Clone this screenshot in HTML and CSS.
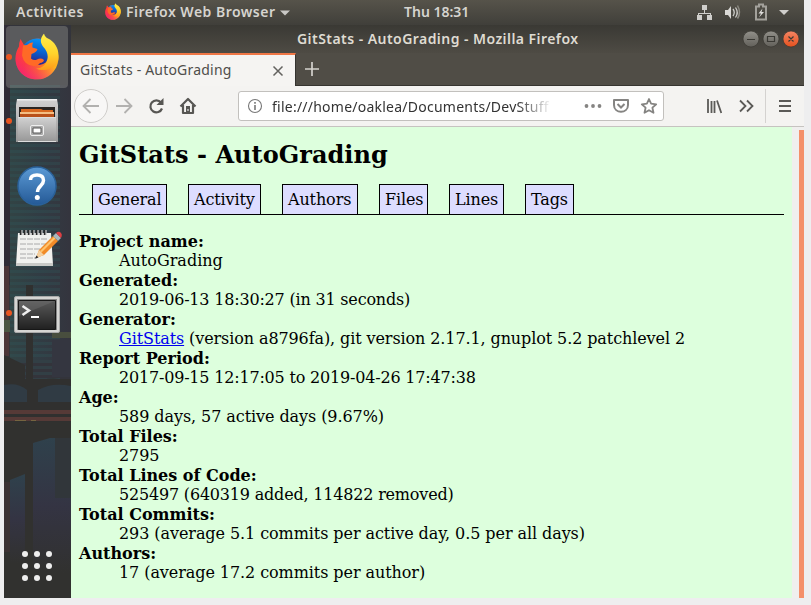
FILE: index.html
```html
<!DOCTYPE html>
<html lang="en">
<head>
<meta charset="utf-8">
<title>GitStats - AutoGrading</title>
<link rel="stylesheet" href="styles.css">
</head>
<body>
<svg class="defs" aria-hidden="true">
  <defs>
    <linearGradient id="fire" x1="0" y1=".3" x2="1" y2=".7"><stop offset="0" stop-color="#ff3a3f"/><stop offset=".3" stop-color="#ff4a2c"/><stop offset=".6" stop-color="#ff7a1c"/><stop offset="1" stop-color="#ffbd1c"/></linearGradient>
    <linearGradient id="pink" x1=".7" y1=".2" x2=".3" y2="1"><stop offset=".4" stop-color="#f0148c" stop-opacity="0"/><stop offset="1" stop-color="#f0148c" stop-opacity=".75"/></linearGradient>
    <linearGradient id="flame" x1="0" y1="0" x2="0" y2="1"><stop offset="0" stop-color="#fff04a"/><stop offset=".55" stop-color="#ffd32c"/><stop offset="1" stop-color="#ff9a18"/></linearGradient>
    <linearGradient id="globe" x1=".6" y1="0" x2=".4" y2="1"><stop offset="0" stop-color="#0a94f5"/><stop offset=".5" stop-color="#0860cf"/><stop offset="1" stop-color="#331b80"/></linearGradient>
    <linearGradient id="metal" x1="0" y1="0" x2="0" y2="1"><stop offset="0" stop-color="#d2d2d2"/><stop offset="1" stop-color="#969696"/></linearGradient>
    <linearGradient id="help" x1="0" y1="0" x2="0" y2="1"><stop offset="0" stop-color="#5b9ad5"/><stop offset="1" stop-color="#245996"/></linearGradient>
    <linearGradient id="screen" x1="0" y1="0" x2="0" y2="1"><stop offset="0" stop-color="#5a5a5a"/><stop offset="1" stop-color="#202020"/></linearGradient>
    <symbol id="firefox" viewBox="0 0 44 46">
      <path d="M5.500 5.500l3.500 6Q15 5 24 5L40 14q4 6 3.500 12C42 38 33 46 22 46 10 46 .5 37 .5 25 .5 20 2 16 4 13q0-4 1.500-7.500z" fill="url(#fire)"/>
      <path d="M5.500 5.500l3.500 6Q15 5 24 5L40 14q4 6 3.500 12C42 38 33 46 22 46 10 46 .5 37 .5 25 .5 20 2 16 4 13q0-4 1.500-7.500z" fill="url(#pink)"/>
      <path d="M9 11.500Q14 5 22 5q12 0 13 12 1 14-13 14.500-5 .5-9-4l1-13z" fill="url(#globe)"/>
      <path d="M8 12l4-.5Q15 8.500 18 9q-1 2-.5 5l5 1.500q-.5 3-6 5l-.5 4.500q3 2.500 6 1 4-2 7 .5-.5 2.500-4 3-2 3-6 3Q9 32 7 22z" fill="#ff6a26"/>
      <path d="M29 0c-4 5-4 9-1 13 5 5 6 11 3 16-2 4-6 6-10 6 9 4 19 0 22-8C45 17 41 9 33 5c-2-1-3.500-2.500-4-5z" fill="url(#flame)"/>
    </symbol>
  </defs>
</svg>
<div class="desktop">
  <header class="topbar">
    <span class="activities">Activities</span>
    <svg class="mini-fox" width="16" height="17"><use href="#firefox"/></svg>
    <span class="appname">Firefox Web Browser</span>
    <svg class="caret" width="10" height="6"><path d="M0 .5h10L5 5.5z" fill="#c9c8c5"/></svg>
    <span class="clock">Thu 18:31</span>
    <svg class="tray" width="96" height="20" viewBox="696 2 96 20">
      <g fill="#cfcecb"><path d="M702 4h5v5h-5zM697 14h5v5h-5zM707 14h5v5h-5z"/><path d="M704 9h1v3h6v2h-1v-1h-11v1h-1v-2h6z"/></g>
      <path d="M725 9h3l3-4v13l-3-4h-3z" fill="#dad9d6"/><path d="M733 8q2.500 3.500 0 7M735.500 6.500q3.500 5 0 10" fill="none" stroke="#cfcecb" stroke-width="1.300"/><path d="M737.500 4.500q4 7 0 13" fill="none" stroke="#8b8981" stroke-width="1.500"/>
      <path d="M759 3.500h4v2h3v13h-10v-13h3z" fill="none" stroke="#a3a19b" stroke-width="2"/><path d="M762.500 7.500l-4 5h2.500l-2 4 5-5.500h-2.500z" fill="#deddda"/>
      <path d="M779 9h10l-5 5z" fill="#cfcecb"/>
    </svg>
  </header>
  <div class="workspace">
    <nav class="dock">
      <svg class="wallpaper" width="67" height="573" viewBox="4 25 67 573">
        <defs>
          <pattern id="rows" width="8" height="6" patternUnits="userSpaceOnUse"><path d="M0 0h8v3H0z" fill="#2f5558" opacity=".6"/></pattern>
          <linearGradient id="city" x1="0" y1="0" x2="1" y2="0"><stop offset="0" stop-color="#31504c"/><stop offset=".5" stop-color="#30424a"/><stop offset="1" stop-color="#353540"/></linearGradient>
          <linearGradient id="fade" x1="0" y1="0" x2="0" y2="1"><stop offset="0" stop-color="#2f414c"/><stop offset=".5" stop-color="#343443"/><stop offset="1" stop-color="#31312f"/></linearGradient>
        </defs>
        <path d="M4 25h67v573H4z" fill="#33343b"/>
        <path d="M10 85h61v275H10z" fill="url(#city)" opacity=".55"/>
        <path d="M10 85h50v295H10z" fill="url(#rows)" opacity=".55"/>
        <path d="M4 25h6v260H4z" fill="#302b36"/><path d="M4 266h5v90H4z" fill="#4c3538"/><path d="M4 320h6v12H4z" fill="#4b5643"/>
        <path d="M26 285h7v120h-7zM4 355l21 10v14H4zM34 383q14-8 37-2v6q-18-6-37 4z" fill="#30302f"/>
        <path d="M52 332h19v6H52z" fill="#484e3e"/><path d="M52 340h19v37H52z" fill="#343640"/>
        <path d="M4 379h67v24H4z" fill="#30302f"/>
        <path d="M4 385q14-3 23 5v12H4zM38 390q14-8 33-4v16H38z" fill="#303b44"/>
        <path d="M4 402h67v38H4z" fill="#30302f"/><path d="M4 410h67v4H4zM4 417h67v4H4z" fill="#563a37"/><path d="M15 420h11v1H15zM31 420h5v1h-5z" fill="#756440"/>
        <path d="M4 422h67v176H4z" fill="#31312f"/><path d="M33 443l17-5h21v135H33z" fill="url(#fade)"/><path d="M55 438h16v60H55z" fill="#31363a"/><path d="M10 480l15-6v90H10z" fill="url(#fade)"/><path d="M4 482h6v70H4z" fill="#3b3233"/>
      </svg>
      <svg class="launcher active" viewBox="6 26 62 62"><circle class="running" cx="9" cy="57" r="3"/><use href="#firefox" x="15" y="33.500" width="44" height="46"/></svg>
      <svg class="launcher" viewBox="6 90 62 62"><circle class="running" cx="9" cy="121" r="3"/>
        <path d="M17 99h40l1 6v37H16v-37z" fill="url(#metal)"/><path d="M17 99h40v1.500H17z" fill="#eee"/><path d="M19 107h36v12H19z" fill="#292522"/><path d="M21 109h20l2 1h10v8H21z" fill="#d96820"/><path d="M20 112h34v4H20z" fill="#f4bd82"/><path d="M20 114h34v3H20z" fill="#b9501a"/>
        <path d="M18 117h38v25H18z" fill="url(#metal)"/><path d="M18 117h38v1H18zM18 141h38v1H18z" fill="#ddd"/><rect x="30.500" y="125.500" width="13" height="10" rx="1.500" fill="#aaa" stroke="#efefef"/><path d="M33 128h8v5h-8z" fill="#fff" stroke="#555"/>
      </svg>
      <svg class="launcher" viewBox="6 154 62 62"><circle cx="37" cy="186" r="19" fill="url(#help)" stroke="#2a6199" stroke-width="1.500"/><path d="M30.500 180q0-5 6.500-5t6.500 5.500c0 5-6 5.500-6 11.500" fill="none" stroke="#fff" stroke-width="3.500"/><circle cx="37.300" cy="197.500" r="2.500" fill="#fff"/></svg>
      <svg class="launcher" viewBox="6 218 62 62"><path d="M18 233h33l2 32H16z" fill="#f1f1ee"/><path d="M16 263h37v3H16z" fill="#c9c9c6"/><path d="M20 239h28M20 244h27M20 249h24M20 254h15M20 258h17" stroke="#aaa" stroke-dasharray="6 1"/><path d="M21 230v5M25 230v5M29 230v5M33 230v5M37 230v5M41 230v5M45 230v5" stroke="#292929" stroke-width="2.500"/><path d="M22 230v5M26 230v5M30 230v5M34 230v5M38 230v5M42 230v5M46 230v5" stroke="#eee"/>
        <path d="M36 258l3-8 14-14 5 5-14 14z" fill="#f18b27"/><path d="M40 251l14-14 1.500 1.500-14 14z" fill="#ffc36c"/><path d="M36 258l3-8 5 5z" fill="#f4d1a1"/><path d="M35 258.500l1.500-3 2 2z" fill="#222"/><path d="M53 236l3-3 5 5-3 3z" fill="#a9b6bd"/><path d="M56 233q2-2 4-1 3 2 1 6z" fill="#df3f43"/></svg>
      <svg class="launcher" viewBox="6 282 62 62"><circle class="running" cx="9" cy="313" r="3"/><rect x="14.500" y="296.500" width="45" height="36" rx="1.500" fill="#d5d5d3" stroke="#aaa"/><path d="M17 299h40v31H17z" fill="#888"/><path d="M18.500 300.500h37v29h-37z" fill="url(#screen)" stroke="#171717"/><path d="M19 301h36L19 316z" fill="#777" opacity=".35"/><path d="M22.500 306l6.500 4.500-6.500 4.500" fill="none" stroke="#eee" stroke-width="2.500"/><path d="M31 316h8v2h-8z" fill="#fff"/></svg>
      <svg class="launcher apps" viewBox="6 535 62 62"><g fill="#eee"><circle cx="25" cy="554" r="3"/><circle cx="37" cy="554" r="3"/><circle cx="49" cy="554" r="3"/><circle cx="25" cy="566" r="3"/><circle cx="37" cy="566" r="3"/><circle cx="49" cy="566" r="3"/><circle cx="25" cy="578" r="3"/><circle cx="37" cy="578" r="3"/><circle cx="49" cy="578" r="3"/></g></svg>
    </nav>
    <section class="window">
      <div class="titlebar">
        <span class="title">GitStats - AutoGrading - Mozilla Firefox</span>
        <svg class="controls" width="58" height="20" viewBox="742 29 58 20">
          <defs><linearGradient id="btn" x1="0" y1="0" x2="0" y2="1"><stop offset="0" stop-color="#92908a"/><stop offset="1" stop-color="#62605a"/></linearGradient><linearGradient id="cls" x1="0" y1="0" x2="0" y2="1"><stop offset="0" stop-color="#f58564"/><stop offset="1" stop-color="#e4511e"/></linearGradient></defs>
          <g stroke="#383630" stroke-width=".7"><circle cx="751" cy="39" r="8" fill="url(#btn)"/><circle cx="771" cy="39" r="8" fill="url(#btn)"/><circle cx="791" cy="39" r="8" fill="url(#cls)"/></g>
          <path d="M747 39.500h8M767.500 36.500h7v5h-7zM788.500 36.500l5 5M793.500 36.500l-5 5" fill="none" stroke="#3a3934" stroke-width="1.200"/>
        </svg>
      </div>
      <div class="tabstrip">
        <div class="tab"><span class="tab-label">GitStats - AutoGrading</span><svg width="12" height="12" viewBox="0 0 12 12"><path d="M1.500 1.500l9 9M10.500 1.500l-9 9" stroke="#63625f" stroke-width="1.500"/></svg></div>
        <svg class="newtab" width="16" height="16"><path d="M1 8h14M8 1v14" stroke="#d4d2cd" stroke-width="1.700"/></svg>
      </div>
      <div class="toolbar">
        <svg class="nav-icons" width="134" height="40" viewBox="71 86 134 40">
          <circle cx="91" cy="106" r="16.500" fill="#f8f7f6" stroke="#cfcdca"/>
          <g fill="none" stroke="#b2b1af" stroke-width="1.800"><path d="M99 106H84M90.500 99l-7 7 7 7M116 106h15M124.500 99l7 7-7 7"/></g>
          <path d="M161 102.500a6 6 0 1 0 1 6" fill="none" stroke="#575653" stroke-width="2.200"/><path d="M163.500 98v7h-7z" fill="#575653"/>
          <path d="M180.500 106.500l7.500-7.500 7.500 7.500M183 105v8h10v-8" fill="none" stroke="#575653" stroke-width="2.200" stroke-linejoin="round"/><path d="M186 106h4v7h-4z" fill="#575653"/><path d="M187.500 109h1v2h-1z" fill="#fff"/>
        </svg>
        <div class="urlbar">
          <svg width="16" height="16"><circle cx="8" cy="8" r="6.500" fill="none" stroke="#777" stroke-width="1.100"/><path d="M7.200 7h1.600v5H7.200zM7.200 4h1.600v1.700H7.200z" fill="#777"/></svg>
          <span class="url">file:///home/oaklea/Documents/DevStuff</span>
          <svg class="page-actions" width="74" height="20" viewBox="584 96 74 20"><g fill="#858482"><circle cx="586.500" cy="106" r="1.900"/><circle cx="593" cy="106" r="1.900"/><circle cx="599.500" cy="106" r="1.900"/></g><path d="M614 100h14v5c0 9-14 9-14 0z" fill="none" stroke="#858482" stroke-width="2" stroke-linejoin="round"/><path d="M617.500 104l3.500 3.500 3.500-3.500" fill="none" stroke="#858482" stroke-width="2"/><path d="M649 99l2.100 4.700 5.100.6-3.800 3.400 1.100 5.100-4.500-2.600-4.500 2.600 1.100-5.100-3.800-3.400 5.100-.6z" fill="none" stroke="#858482" stroke-width="1.800" stroke-linejoin="round"/></svg>
        </div>
        <svg class="tools" width="98" height="40" viewBox="705 86 98 40"><g fill="none" stroke="#5b5a57" stroke-width="1.800"><path d="M708 99v14M711.500 101v12M714.500 101v12M717 100.500l4.300 12.500M740 100.500l5.500 5.500-5.500 5.500M747 100.500l5.500 5.500-5.500 5.500M779 101h12M779 106h12M779 111h12"/></g><path d="M765.500 89v34" stroke="#d4d2d0"/></svg>
      </div>
      <div class="viewport">
        <main class="page">
          <h1>GitStats - AutoGrading</h1>
          <ul class="sections"><li>General</li><li>Activity</li><li>Authors</li><li>Files</li><li>Lines</li><li>Tags</li></ul>
          <dl>
            <dt>Project name:</dt><dd class="natural">AutoGrading</dd>
            <dt>Generated:</dt><dd class="tighter">2019-06-13 18:30:27 (in 31 seconds)</dd>
            <dt>Generator:</dt><dd class="tight"><a href="#">GitStats</a> (version a8796fa), git version 2.17.1, gnuplot 5.2 patchlevel 2</dd>
            <dt>Report Period:</dt><dd class="tighter">2017-09-15 12:17:05 to 2019-04-26 17:47:38</dd>
            <dt>Age:</dt><dd>589 days, 57 active days (9.67%)</dd>
            <dt>Total Files:</dt><dd>2795</dd>
            <dt>Total Lines of Code:</dt><dd class="tighter">525497 (640319 added, 114822 removed)</dd>
            <dt>Total Commits:</dt><dd>293 (average 5.1 commits per active day, 0.5 per all days)</dd>
            <dt>Authors:</dt><dd>17 (average 17.2 commits per author)</dd>
          </dl>
        </main>
        <div class="scrollbar"></div>
      </div>
    </section>
  </div>
</div>
</body>
</html>
```
FILE: styles.css
```css
* { box-sizing: border-box; }
body { margin: 0; background: #eeeeef; overflow: hidden; font-family: "Noto Sans", sans-serif; }
svg { display: block; flex: none; }
span { white-space: nowrap; }
.defs { position: absolute; width: 0; height: 0; }
.desktop { width: 800px; height: 598px; margin-left: 4px; overflow: hidden; }

.topbar { height: 25px; display: flex; align-items: center; padding: 0 12px; background: linear-gradient(#56534a, #403f3a); color: #d6d4cf; font-size: 14px; font-weight: 600; line-height: 24px; }
.topbar span { height: 25px; }
.activities { width: 89px; letter-spacing: .55px; }
.mini-fox { margin-right: 5px; margin-top: -2px; }
.appname { width: 154px; letter-spacing: .48px; }
.clock { margin-left: 114px; width: 292px; line-height: 23px; }
.tray { margin-right: -12px; }

.workspace { display: flex; height: 573px; }
.dock { position: relative; width: 67px; padding: 1px 2px; display: flex; flex-direction: column; gap: 2px; }
.wallpaper { position: absolute; left: 0; top: 0; }
.launcher { position: relative; width: 62px; height: 62px; }
.active { background: rgba(160, 160, 155, .36); border-radius: 4px; }
.running { fill: #e95420; }
.apps { margin-top: auto; }

.window { width: 733px; display: flex; flex-direction: column; }
.titlebar { height: 28px; display: flex; justify-content: flex-end; align-items: center; background: linear-gradient(#3a3934, #4e4b44); color: #dfdbd2; }
.title { width: 445px; font-size: 14px; font-weight: 600; line-height: 28px; letter-spacing: .45px; }
.controls { margin-right: 4px; }
.tabstrip { height: 33px; display: flex; align-items: center; background: #504d46; border-bottom: 1px solid #363530; }
.tab { width: 225px; height: 33px; margin-bottom: -1px; border-top: 2px solid #f07746; border-right: 1px solid #34332f; background: #f5f4f2; color: #4f4e4b; display: flex; align-items: center; padding: 0 11px 0 9px; justify-content: space-between; font-size: 14px; }
.tab-label { letter-spacing: .2px; padding-bottom: 2px; }
.newtab { margin-left: 8px; }
.toolbar { height: 41px; background: #f4f3f1; border-bottom: 1px solid #c6c3c0; display: flex; align-items: center; }
.urlbar { width: 426px; height: 30px; margin-left: 33px; border: 1px solid #c2c0bd; border-radius: 3px; background: #fff; display: flex; align-items: center; padding: 0 5px 0 8px; }
.url { margin-left: 9px; width: 287px; color: #333; font-size: 14px; letter-spacing: .24px; overflow: hidden; -webkit-mask-image: linear-gradient(90deg, #000 245px, transparent 280px); mask-image: linear-gradient(90deg, #000 245px, transparent 280px); }
.page-actions { margin-left: auto; }
.tools { margin-left: 41px; }

.viewport { height: 471px; display: flex; background: #f0efee; }
.page { width: 721px; padding: 0 8px; background: #dfd; color: #000; font: 16px/19px "DejaVu Serif", serif; }
h1 { margin: 13px 0 15px; font-size: 24px; line-height: 29px; letter-spacing: .04px; }
.sections { display: grid; grid-template-columns: 75px 73px 76px 49px 55px 49px; column-gap: 21px; list-style: none; margin: 0; padding: 0 13px; height: 31px; border-bottom: 1px solid #000; }
.sections li { height: 30px; padding: 5px 0 0 5px; border: 1px solid #000; border-bottom: 0; background: #ddf; letter-spacing: -.12px; }
dl { margin: 17px 0 0; }
dt { font-weight: bold; height: 20px; line-height: 20px; }
dd { margin: 0 0 0 40px; height: 19px; line-height: 17px; letter-spacing: -.075px; }
.natural { letter-spacing: 0; }
.tight { letter-spacing: -.1px; }
.tighter { letter-spacing: -.19px; }
a { color: #00e; }
.scrollbar { width: 5px; margin: 3px 0 0 7px; background: #f4906a; }
```
